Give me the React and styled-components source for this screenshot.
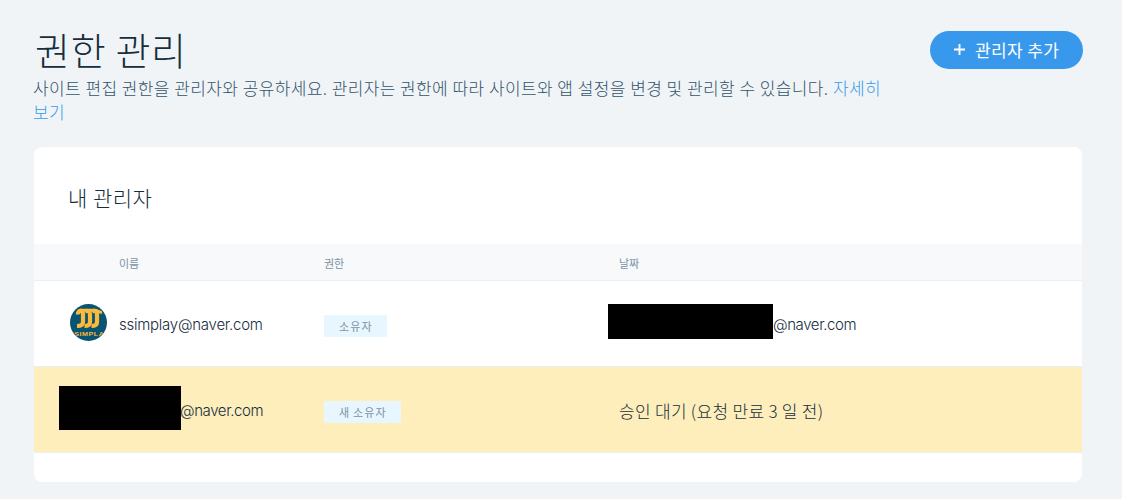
import React from "react";
import styled, { createGlobalStyle } from "styled-components";

const GlobalStyle = createGlobalStyle`
  * {
    box-sizing: border-box;
  }

  body {
    margin: 0;
    background-color: #f0f4f7;
    font-family: "Noto Sans CJK KR", sans-serif;
    font-weight: 300;
    color: #162d3d;
  }
`;

const Page = styled.div`
  height: 499px;
  padding: 28px 40px 0 34px;
`;

const PageHeader = styled.header`
  display: flex;
  justify-content: space-between;
  align-items: flex-start;
  height: 119px;
  margin-right: -1px;
`;

const Heading = styled.div`
  width: 850px;
`;

const Title = styled.h1`
  margin: 0;
  padding-left: 1px;
  font-size: 38px;
  font-weight: 300;
  line-height: 42px;
  letter-spacing: 0.7px;
`;

const Description = styled.p`
  margin: 6px 0 0 -1px;
  font-size: 17px;
  line-height: 24px;
  letter-spacing: 0.36px;
  word-spacing: 0.3px;
  color: #32536a;
`;

const MoreLink = styled.a`
  color: #3899ec;
  text-decoration: none;
`;

const AddButton = styled.button`
  display: flex;
  align-items: center;
  gap: 10px;
  width: 153px;
  height: 38px;
  margin-top: 3px;
  padding: 0 0 1px 24px;
  border: 0;
  border-radius: 19px;
  background-color: #3899ec;
  color: white;
  font-family: inherit;
  font-size: 17px;
  font-weight: 400;
  letter-spacing: 0.36px;
  white-space: nowrap;
`;

const Card = styled.section`
  width: 1048px;
  height: 335px;
  border-radius: 8px;
  background-color: white;
`;

const CardTitle = styled.h2`
  height: 97px;
  margin: 0;
  padding: 35px 34px 0;
  font-size: 21px;
  font-weight: 300;
  line-height: 30px;
  letter-spacing: 0.5px;
`;

const Row = styled.div`
  display: grid;
  grid-template-columns: 85px 205px 295px 1fr;
  align-items: center;
  height: 86px;
  border-bottom: 1px solid #eaeff3;
  background-color: ${(props) => (props.$pending ? "#fdeebb" : "white")};
`;

const HeadRow = styled(Row)`
  height: 37px;
  padding-top: 2px;
  background-color: #f7f9fb;
  color: #7a92a5;
  font-size: 11px;
  font-weight: 400;
`;

const Cell = styled.div`
  position: relative;
  display: flex;
  align-items: center;
  height: 100%;
  padding-top: ${(props) => props.$top || 0}px;
  font-size: 17px;
  letter-spacing: 0.3px;
  white-space: nowrap;
`;

const AvatarCell = styled.div`
  padding: 0 0 2px 36px;
  line-height: 0;
`;

const Email = styled.span`
  padding-left: ${(props) => props.$indent || 0}px;
  font-family: Inter, "Liberation Sans", sans-serif;
  font-size: 15px;
  font-weight: 300;
  letter-spacing: ${(props) => (props.$indent ? -0.4 : -0.25)}px;
`;

const Redacted = styled.span`
  position: absolute;
  top: ${(props) => props.$top}px;
  left: ${(props) => props.$left}px;
  width: ${(props) => props.$width}px;
  height: ${(props) => props.$height}px;
  background-color: black;
`;

const Badge = styled.span`
  height: 22px;
  padding: 0 14px 0 15px;
  border-radius: 2px;
  background-color: #e8f6ff;
  color: #7a92a5;
  font-size: 11px;
  font-weight: 400;
  line-height: 23px;
  letter-spacing: 1.15px;
  word-spacing: -0.8px;
`;

const PlusIcon = () => (
  <svg width="11" height="11" viewBox="0 0 11 11" fill="none">
    <path d="M5.5 0v11M0 5.5h11" stroke="white" strokeWidth="1.9" />
  </svg>
);

const Avatar = () => (
  <svg width="37" height="37" viewBox="0 0 37 37">
    <defs>
      <clipPath id="avatar">
        <circle cx="18.5" cy="18.5" r="18.5" />
      </clipPath>
    </defs>
    <g clipPath="url(#avatar)">
      <rect width="37" height="37" fill="#075473" />
      <g fill="none" stroke="#fcb93a" strokeWidth="4.2">
        <path d="M8 10.500C7.500 6 13 5.500 13 10v8c0 3-2 4-6 4" />
        <path d="M15 7.500c3-1.500 5 0 5 3v7.500c0 3-2 4-5.500 4" />
        <path d="M22 7.500c3-1.500 5 0 5 3v7.500c0 3-2 4-5.500 4" />
        <path d="M10 6.300h15c3 0 3.500 2.500 7 2" strokeWidth="3" />
      </g>
      <text
        x="-1"
        y="32.2"
        textLength="40"
        lengthAdjust="spacingAndGlyphs"
        fill="#fcb93a"
        fontFamily="Liberation Sans, sans-serif"
        fontSize="5.6"
        fontWeight="700"
        letterSpacing="0.4"
      >
        SSIMPLAY
      </text>
    </g>
  </svg>
);

export default function App() {
  return (
    <>
      <GlobalStyle />
      <Page>
        <PageHeader>
          <Heading>
            <Title>권한 관리</Title>
            <Description>
              사이트 편집 권한을 관리자와 공유하세요. 관리자는 권한에 따라 사이트와 앱 설정을 변경 및 관리할 수 있습니다.{" "}
              <MoreLink>자세히 보기</MoreLink>
            </Description>
          </Heading>
          <AddButton>
            <PlusIcon />
            관리자 추가
          </AddButton>
        </PageHeader>

        <Card>
          <CardTitle>내 관리자</CardTitle>
          <HeadRow>
            <span />
            <span>이름</span>
            <span>권한</span>
            <span>날짜</span>
          </HeadRow>
          <Row>
            <AvatarCell>
              <Avatar />
            </AvatarCell>
            <Cell $top={1}>
              <Email>ssimplay@naver.com</Email>
            </Cell>
            <Cell $top={4}>
              <Badge>소유자</Badge>
            </Cell>
            <Cell $top={1}>
              <Redacted $top={23} $left={-11} $width={165} $height={35} />
              <Email $indent={154}>@naver.com</Email>
            </Cell>
          </Row>
          <Row $pending>
            <span />
            <Cell $top={1}>
              <Redacted $top={19} $left={-60} $width={122} $height={44} />
              <Email $indent={61}>@naver.com</Email>
            </Cell>
            <Cell $top={4}>
              <Badge>새 소유자</Badge>
            </Cell>
            <Cell $top={1}>승인 대기 (요청 만료 3 일 전)</Cell>
          </Row>
        </Card>
      </Page>
    </>
  );
}
